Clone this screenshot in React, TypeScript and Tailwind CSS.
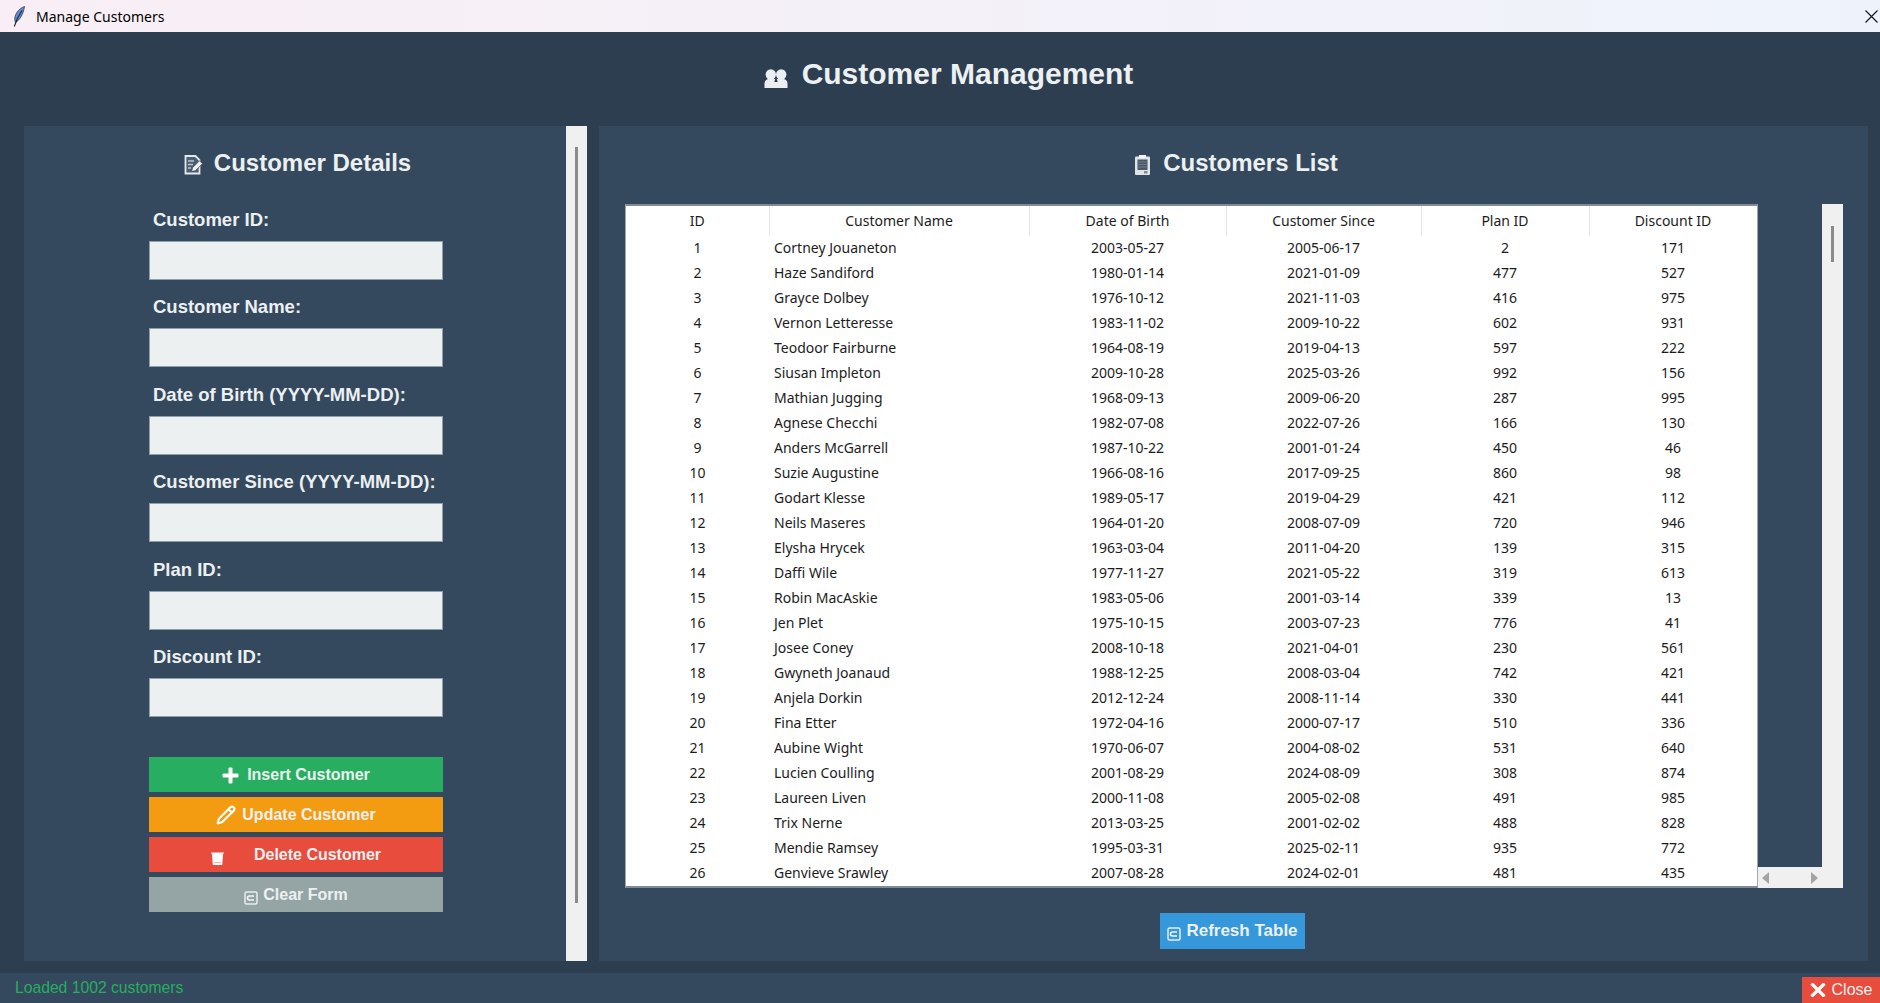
import React from 'react';
import { Pencil } from 'lucide-react';

const rows = [
  [1, 'Cortney Jouaneton', '2003-05-27', '2005-06-17', 2, 171],
  [2, 'Haze Sandiford', '1980-01-14', '2021-01-09', 477, 527],
  [3, 'Grayce Dolbey', '1976-10-12', '2021-11-03', 416, 975],
  [4, 'Vernon Letteresse', '1983-11-02', '2009-10-22', 602, 931],
  [5, 'Teodoor Fairburne', '1964-08-19', '2019-04-13', 597, 222],
  [6, 'Siusan Impleton', '2009-10-28', '2025-03-26', 992, 156],
  [7, 'Mathian Jugging', '1968-09-13', '2009-06-20', 287, 995],
  [8, 'Agnese Checchi', '1982-07-08', '2022-07-26', 166, 130],
  [9, 'Anders McGarrell', '1987-10-22', '2001-01-24', 450, 46],
  [10, 'Suzie Augustine', '1966-08-16', '2017-09-25', 860, 98],
  [11, 'Godart Klesse', '1989-05-17', '2019-04-29', 421, 112],
  [12, 'Neils Maseres', '1964-01-20', '2008-07-09', 720, 946],
  [13, 'Elysha Hrycek', '1963-03-04', '2011-04-20', 139, 315],
  [14, 'Daffi Wile', '1977-11-27', '2021-05-22', 319, 613],
  [15, 'Robin MacAskie', '1983-05-06', '2001-03-14', 339, 13],
  [16, 'Jen Plet', '1975-10-15', '2003-07-23', 776, 41],
  [17, 'Josee Coney', '2008-10-18', '2021-04-01', 230, 561],
  [18, 'Gwyneth Joanaud', '1988-12-25', '2008-03-04', 742, 421],
  [19, 'Anjela Dorkin', '2012-12-24', '2008-11-14', 330, 441],
  [20, 'Fina Etter', '1972-04-16', '2000-07-17', 510, 336],
  [21, 'Aubine Wight', '1970-06-07', '2004-08-02', 531, 640],
  [22, 'Lucien Coulling', '2001-08-29', '2024-08-09', 308, 874],
  [23, 'Laureen Liven', '2000-11-08', '2005-02-08', 491, 985],
  [24, 'Trix Nerne', '2013-03-25', '2001-02-02', 488, 828],
  [25, 'Mendie Ramsey', '1995-03-31', '2025-02-11', 935, 772],
  [26, 'Genvieve Srawley', '2007-08-28', '2024-02-01', 481, 435],
];

const columns = [
  { title: 'ID', width: 'w-[143px]' },
  { title: 'Customer Name', width: 'w-[260px]' },
  { title: 'Date of Birth', width: 'w-[197px]' },
  { title: 'Customer Since', width: 'w-[195px]' },
  { title: 'Plan ID', width: 'w-[168px]' },
  { title: 'Discount ID', width: 'w-[168px]' },
];

const fields = [
  'Customer ID:',
  'Customer Name:',
  'Date of Birth (YYYY-MM-DD):',
  'Customer Since (YYYY-MM-DD):',
  'Plan ID:',
  'Discount ID:',
];

function FeatherIcon() {
  return (
    <svg width="14" height="21" viewBox="0 0 14 21">
      <path d="M12.500 0.500C8 2 3.500 6.500 2.800 12c-.2 1.800 0 3.300.6 4.500C7.500 14.500 11.500 8 12.500 0.500z" fill="#5f8fd0" stroke="#1d2b44" strokeWidth="0.700" />
      <path d="M10 4.500C7.500 8 4.500 13.500 2.300 20.500" fill="none" stroke="#20242c" strokeWidth="1.100" />
    </svg>
  );
}

function UsersIcon() {
  return (
    <svg width="24" height="19" viewBox="0 0 24 19" fill="#eceff1">
      <circle cx="6.800" cy="5.500" r="5.200" />
      <circle cx="17.200" cy="5.500" r="5.200" />
      <path d="M0.500 19v-4.500C0.500 11.500 2.500 10 5 10h14c2.500 0 4.500 1.500 4.500 4.500V19z" />
      <path d="M12 8l1.800 5h-3.600z" fill="#2c3e50" />
    </svg>
  );
}

function DocEditIcon() {
  return (
    <svg width="20" height="20" viewBox="0 0 20 20">
      <path d="M1.500 1h10l4 4v13.500h-14z" fill="#4c5f72" stroke="#e4e8ea" strokeWidth="1.800" />
      <path d="M4 6h6M4 9.500h5M4 13h3" stroke="#b9c3ca" strokeWidth="1.300" />
      <path d="M7.500 16.500l1-3.800 7-7 3 3-7 7z" fill="#f1f3f4" stroke="#34495e" strokeWidth="0.800" />
    </svg>
  );
}

function ClipboardIcon() {
  return (
    <svg width="17" height="22" viewBox="0 0 17 22">
      <rect x="1" y="2.500" width="15" height="18.500" rx="1" fill="#dfe4e7" />
      <rect x="5" y="1" width="7" height="3" fill="#f4f6f7" />
      <rect x="3.500" y="5.500" width="10" height="10.500" fill="#4a5a69" />
      <path d="M3.500 8h10M3.500 10.500h10M3.500 13h10" stroke="#75838f" strokeWidth="0.800" />
      <rect x="10" y="17" width="3.500" height="2.500" fill="#7d8c98" />
    </svg>
  );
}

function PlusIcon() {
  return (
    <svg width="17" height="17" viewBox="0 0 17 17" fill="#fff">
      <rect x="6.500" y="0.500" width="4" height="16" rx="1" />
      <rect x="0.500" y="6.500" width="16" height="4" rx="1" />
    </svg>
  );
}

function TrashIcon() {
  return (
    <svg width="13" height="13" viewBox="0 0 13 13" fill="#fff">
      <path d="M0 0.500h13l-1 2-.8 10.500H1.800L1 2.500z" />
      <path d="M3 10.500h7" stroke="#f2b5ae" strokeWidth="1" />
    </svg>
  );
}

function ClearIcon() {
  return (
    <svg width="14" height="14" viewBox="0 0 14 14">
      <rect x="1" y="1" width="12" height="12" rx="1.500" fill="none" stroke="#e8ecee" strokeWidth="1.500" />
      <path d="M10 5H5.500a2 2 0 0 0 0 4H10" fill="none" stroke="#f4f6f7" strokeWidth="1.600" />
    </svg>
  );
}

function CrossIcon() {
  return (
    <svg width="16" height="14" viewBox="0 0 16 14" fill="none" stroke="#fff" strokeWidth="3.200">
      <path d="M1.500 0.500L14.500 13.500M14.500 0.500L1.500 13.500" />
    </svg>
  );
}

export default function App() {
  return (
    <div className="flex h-screen flex-col overflow-hidden bg-[#2c3e50] font-['Liberation_Sans',Arial,sans-serif]">
      {/* window title bar */}
      <div className="flex h-8 shrink-0 items-center justify-between bg-gradient-to-r from-[#f9eef5] to-[#eef3fb] pl-3 pr-[2px]">
        <div className="flex items-center gap-[10px]">
          <FeatherIcon />
          <span className="font-['Noto_Sans',sans-serif] text-[14px] text-black">Manage Customers</span>
        </div>
        <svg width="13" height="13" viewBox="0 0 13 13" fill="none" stroke="#111" strokeWidth="1.100">
          <path d="M0.500 0.500L12.500 12.500M12.500 0.500L0.500 12.500" />
        </svg>
      </div>

      <div className="flex h-[94px] shrink-0 items-center justify-center gap-[14px] pb-[12px] pl-[17px]">
        <span className="mt-[11px]">
          <UsersIcon />
        </span>
        <h1 className="text-[30px] font-bold text-[#ecf0f1]">Customer Management</h1>
      </div>

      <div className="flex h-[835px] shrink-0 pl-6 pr-3">
        {/* form panel */}
        <div className="w-[542px] bg-[#34495e]">
          <div className="flex h-[66px] items-center justify-center gap-[10px] pl-[5px] pt-[7px]">
            <span className="mt-[5px]">
              <DocEditIcon />
            </span>
            <h2 className="text-[24px] font-bold text-[#ecf0f1]">Customer Details</h2>
          </div>
          <div className="ml-[125px] w-[294px]">
            {fields.map((label) => (
              <div key={label} className="pt-[15.5px]">
                <div className="mb-[9px] h-6 pl-[4px] text-[18.5px] font-bold leading-6 text-[#ecf0f1]">{label}</div>
                <div className="h-[39px] border border-[#8fa0ad] bg-[#ecf0f1]" />
              </div>
            ))}
            <div className="mt-10 flex flex-col gap-[5px] text-[16px] font-bold text-[#ecf0f1]">
              <button className="flex h-[35px] items-center justify-center gap-[8px] bg-[#27ae60] pt-[1px]">
                <PlusIcon />
                Insert Customer
              </button>
              <button className="flex h-[35px] items-center justify-center gap-[6px] bg-[#f39c12] pt-[1px]">
                <Pencil className="h-5 w-5 text-white" strokeWidth={2.500} />
                Update Customer
              </button>
              <button className="flex h-[35px] items-center justify-center gap-[30px] bg-[#e74c3c] pt-[1px]">
                <span className="mt-[7px]">
                  <TrashIcon />
                </span>
                Delete Customer
              </button>
              <button className="flex h-[35px] items-center justify-center gap-[5px] bg-[#95a5a6] pt-[1px]">
                <span className="mt-[6px]">
                  <ClearIcon />
                </span>
                Clear Form
              </button>
            </div>
          </div>
        </div>

        <div className="flex w-[21px] shrink-0 justify-center bg-[#f0f0f0] pt-[21px]">
          <div className="h-[756px] w-[3px] bg-[#8a8a8a]" />
        </div>

        {/* table panel */}
        <div className="ml-3 flex-1 bg-[#34495e]">
          <div className="flex h-[78px] items-center justify-center gap-[12px] pb-[5px] pl-[5px]">
            <span className="mt-[4px]">
              <ClipboardIcon />
            </span>
            <h2 className="text-[24px] font-bold text-[#ecf0f1]">Customers List</h2>
          </div>
          <div className="ml-[26px] flex h-[684px] w-[1218px]">
            <div className="h-full w-[1133px] overflow-hidden border-x border-t-2 border-b-2 border-x-[#a0a9b1] border-t-[#7f8c97] border-b-[#7f8c97] bg-white">
              <table className="w-[1131px] table-fixed border-collapse font-['Noto_Sans',sans-serif] text-[14px] text-[#1c1c1c]">
                <thead>
                  <tr className="h-[30px]">
                    {columns.map((col) => (
                      <th key={col.title} className={`${col.width} border-r border-[#e5e5e5] pb-[2px] font-normal`}>
                        {col.title}
                      </th>
                    ))}
                  </tr>
                </thead>
                <tbody>
                  {rows.map((row) => (
                    <tr key={row[0]} className="h-[25px] [&>td]:pb-[2px]">
                      <td className="text-center">{row[0]}</td>
                      <td className="pl-[5px]">{row[1]}</td>
                      <td className="text-center">{row[2]}</td>
                      <td className="text-center">{row[3]}</td>
                      <td className="text-center">{row[4]}</td>
                      <td className="text-center">{row[5]}</td>
                    </tr>
                  ))}
                </tbody>
              </table>
            </div>
            <div className="flex flex-1 flex-col justify-end">
              <div className="flex h-[21px] items-center justify-between bg-[#f0f0f0] px-[4px]">
                <svg width="8" height="12" viewBox="0 0 8 12" fill="#a3a3a3">
                  <path d="M7 0v12L0 6z" />
                </svg>
                <svg width="8" height="12" viewBox="0 0 8 12" fill="#a3a3a3">
                  <path d="M1 0v12l7-6z" />
                </svg>
              </div>
            </div>
            <div className="flex w-[21px] shrink-0 justify-center bg-[#f0f0f0] pt-[22px]">
              <div className="h-[36px] w-[3px] bg-[#8a8a8a]" />
            </div>
          </div>
          <div className="mt-[25px] flex justify-center pr-[2px]">
            <button className="flex h-9 w-[145px] items-center justify-center gap-[5px] bg-[#3498db] text-[17px] font-bold text-[#ecf0f1]">
              <span className="mt-[6px]">
                <ClearIcon />
              </span>
              Refresh Table
            </button>
          </div>
        </div>
      </div>

      {/* status bar */}
      <div className="mt-3 flex h-[30px] shrink-0 items-end justify-between bg-[#34495e]">
        <span className="pb-[3px] pl-[15px] text-[15.7px] text-[#27ae60]">Loaded 1002 customers</span>
        <button className="flex h-[26px] w-[78px] items-center justify-center gap-[6px] bg-[#e74c3c] text-[16px] text-[#ecf0f1]">
          <CrossIcon />
          Close
        </button>
      </div>
    </div>
  );
}
